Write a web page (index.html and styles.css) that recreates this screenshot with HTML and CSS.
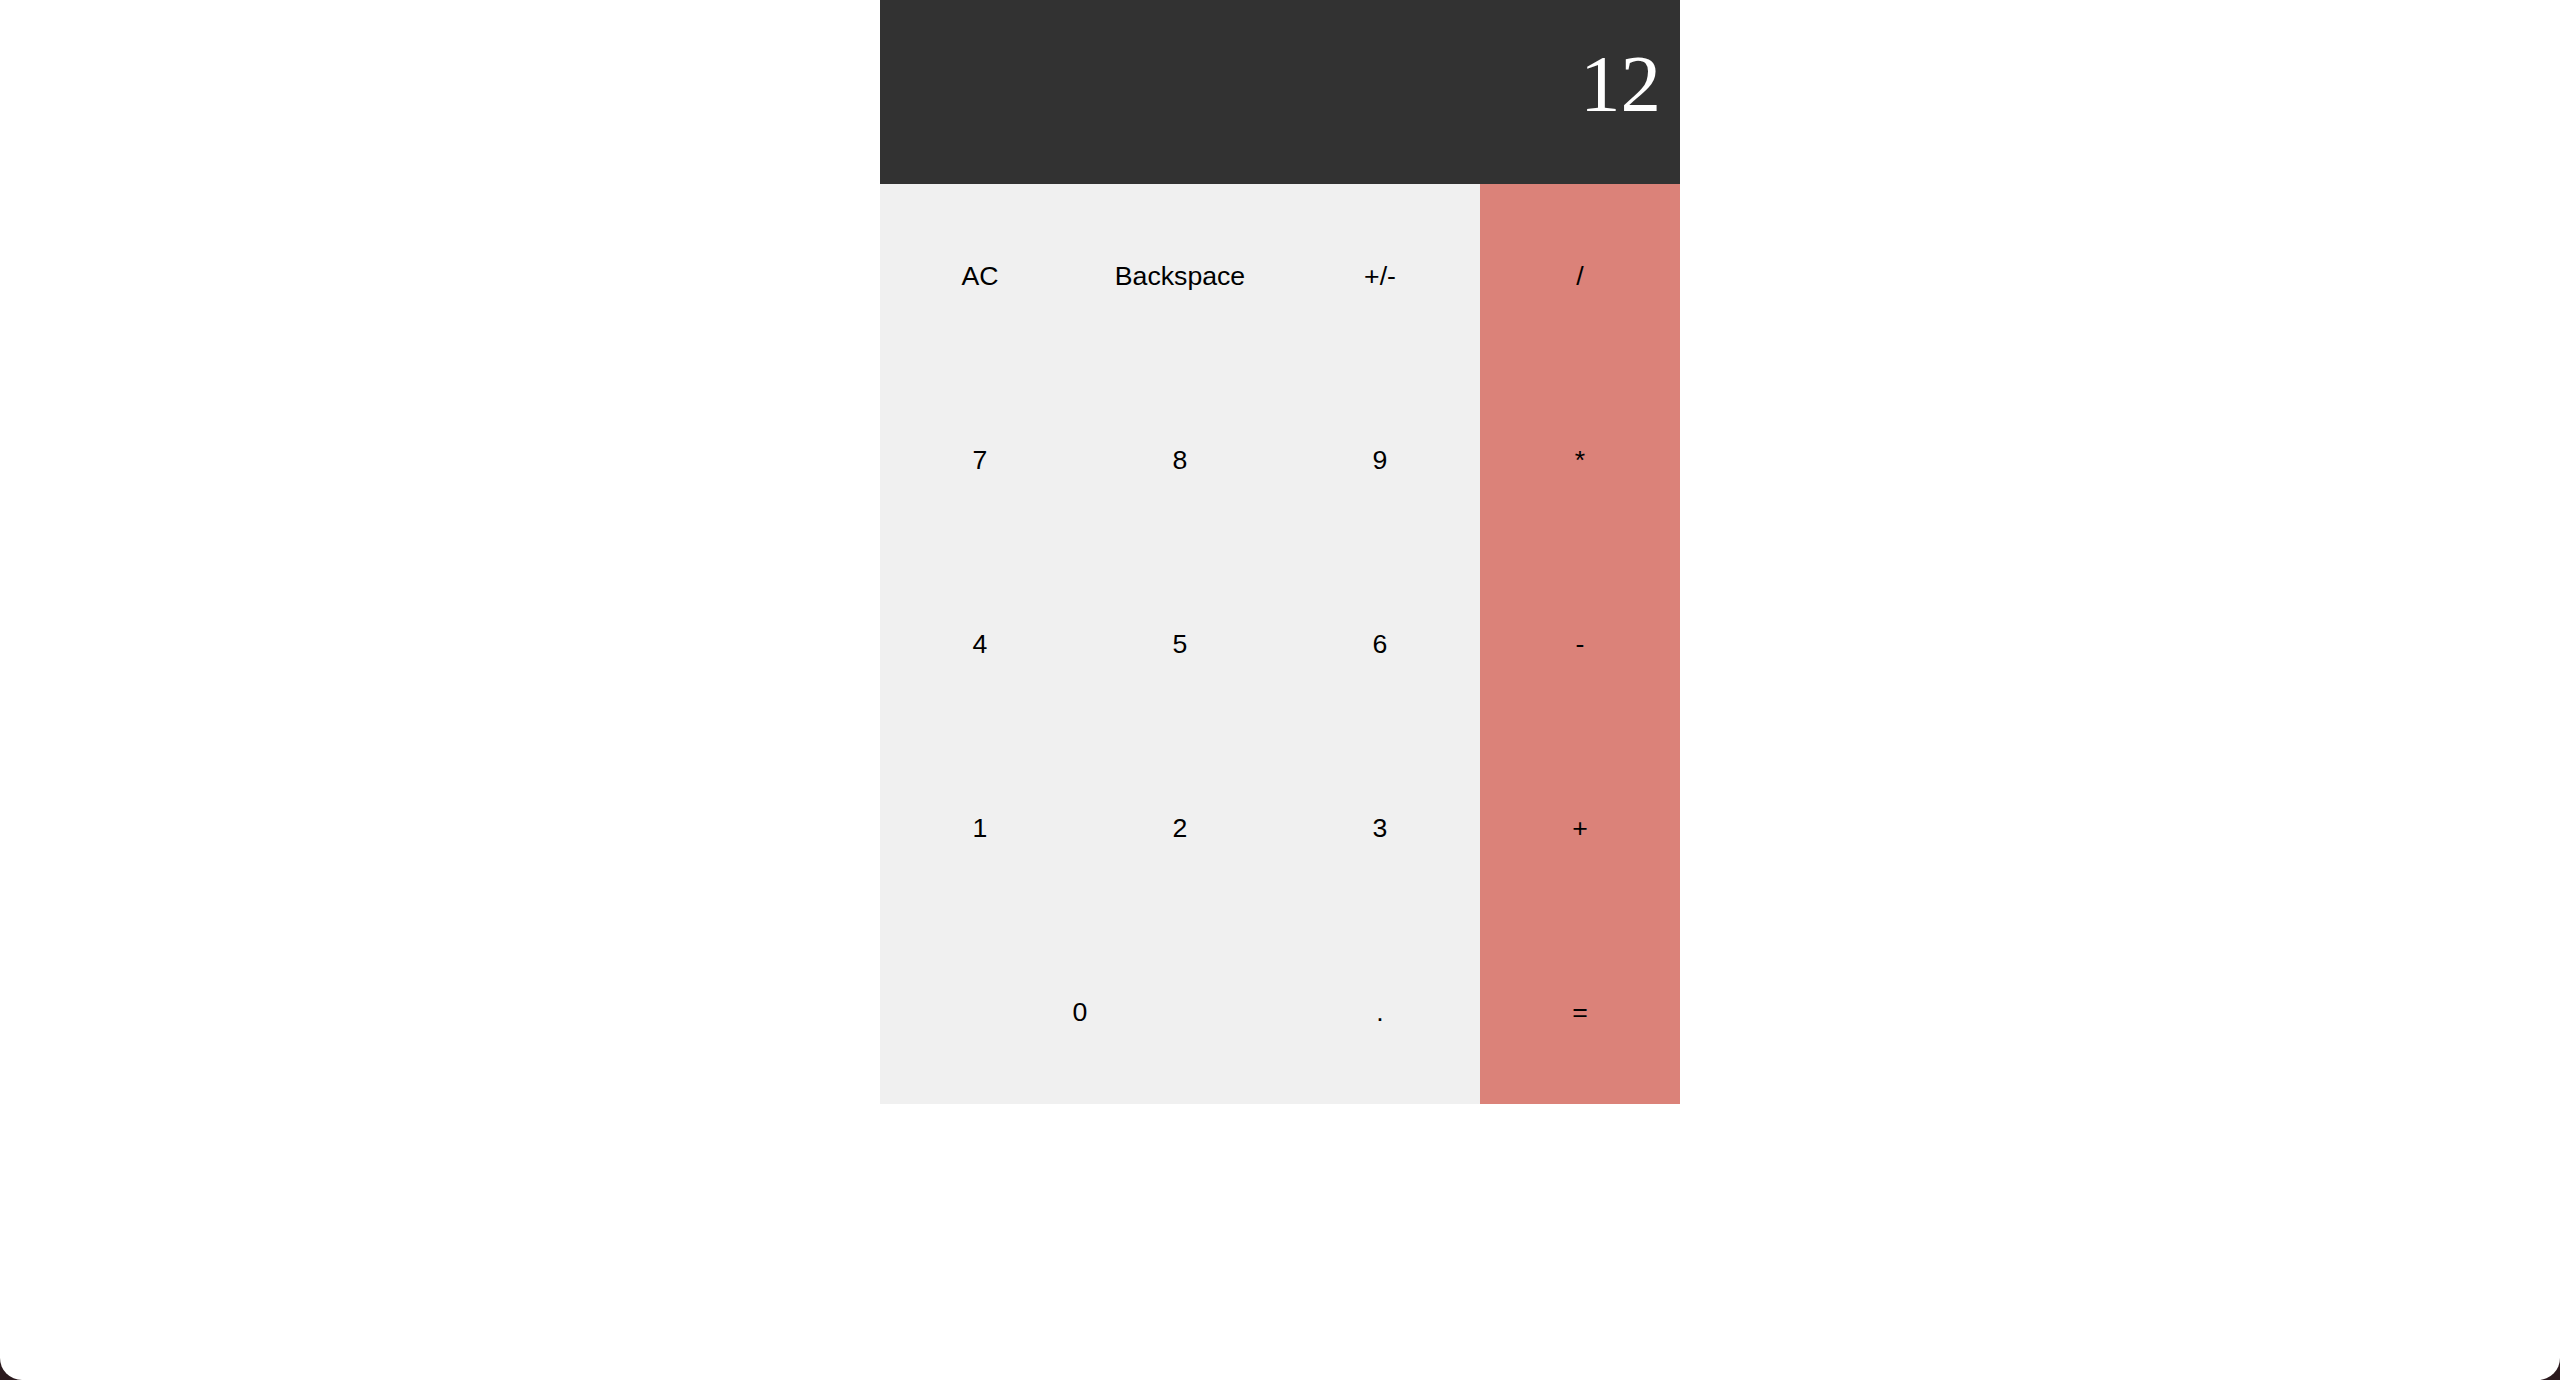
FILE: index.html
```html
<!DOCTYPE html>
<html lang="en">
<head>
    <meta charset="UTF-8">
    <meta name="viewport" content="width=device-width, initial-scale=1.0">
    <title>Calculator</title>
    <link rel="stylesheet" href="styles.css">
</head>
<body>
    <div class="calculator">
        <div class="display">12</div>
        <div class="keys">
            <button class="key">AC</button>
            <button class="key">Backspace</button>
            <button class="key">+/-</button>
            <button class="key op">/</button>

            <button class="key">7</button>
            <button class="key">8</button>
            <button class="key">9</button>
            <button class="key op">*</button>

            <button class="key">4</button>
            <button class="key">5</button>
            <button class="key">6</button>
            <button class="key op">-</button>

            <button class="key">1</button>
            <button class="key">2</button>
            <button class="key">3</button>
            <button class="key op">+</button>

            <button class="key zero">0</button>
            <button class="key">.</button>
            <button class="key op">=</button>
        </div>
    </div>
</body>
</html>
```

FILE: styles.css
```css
html { background: #2b1a1e; }
body { margin: 0; height: 100vh; background: #fff; border-radius: 0 0 22px 22px; }

.calculator { width: 800px; margin: 0 auto; }

.display { height: 184px; box-sizing: border-box; padding: 44px 19px 0; background: #323232; color: #fff; text-align: right; font-family: "Liberation Serif", serif; font-size: 81px; line-height: 1; }

.keys { display: grid; grid-template-columns: repeat(4, 200px); grid-auto-rows: 184px; }
.key { border: none; margin: 0; padding: 0; background: #f0f0f0; color: #000; font-family: "Liberation Sans", Arial, sans-serif; font-size: 26.67px; cursor: pointer; }
.key.op { background: #db8279; }
.key.zero { grid-column: span 2; }
```
